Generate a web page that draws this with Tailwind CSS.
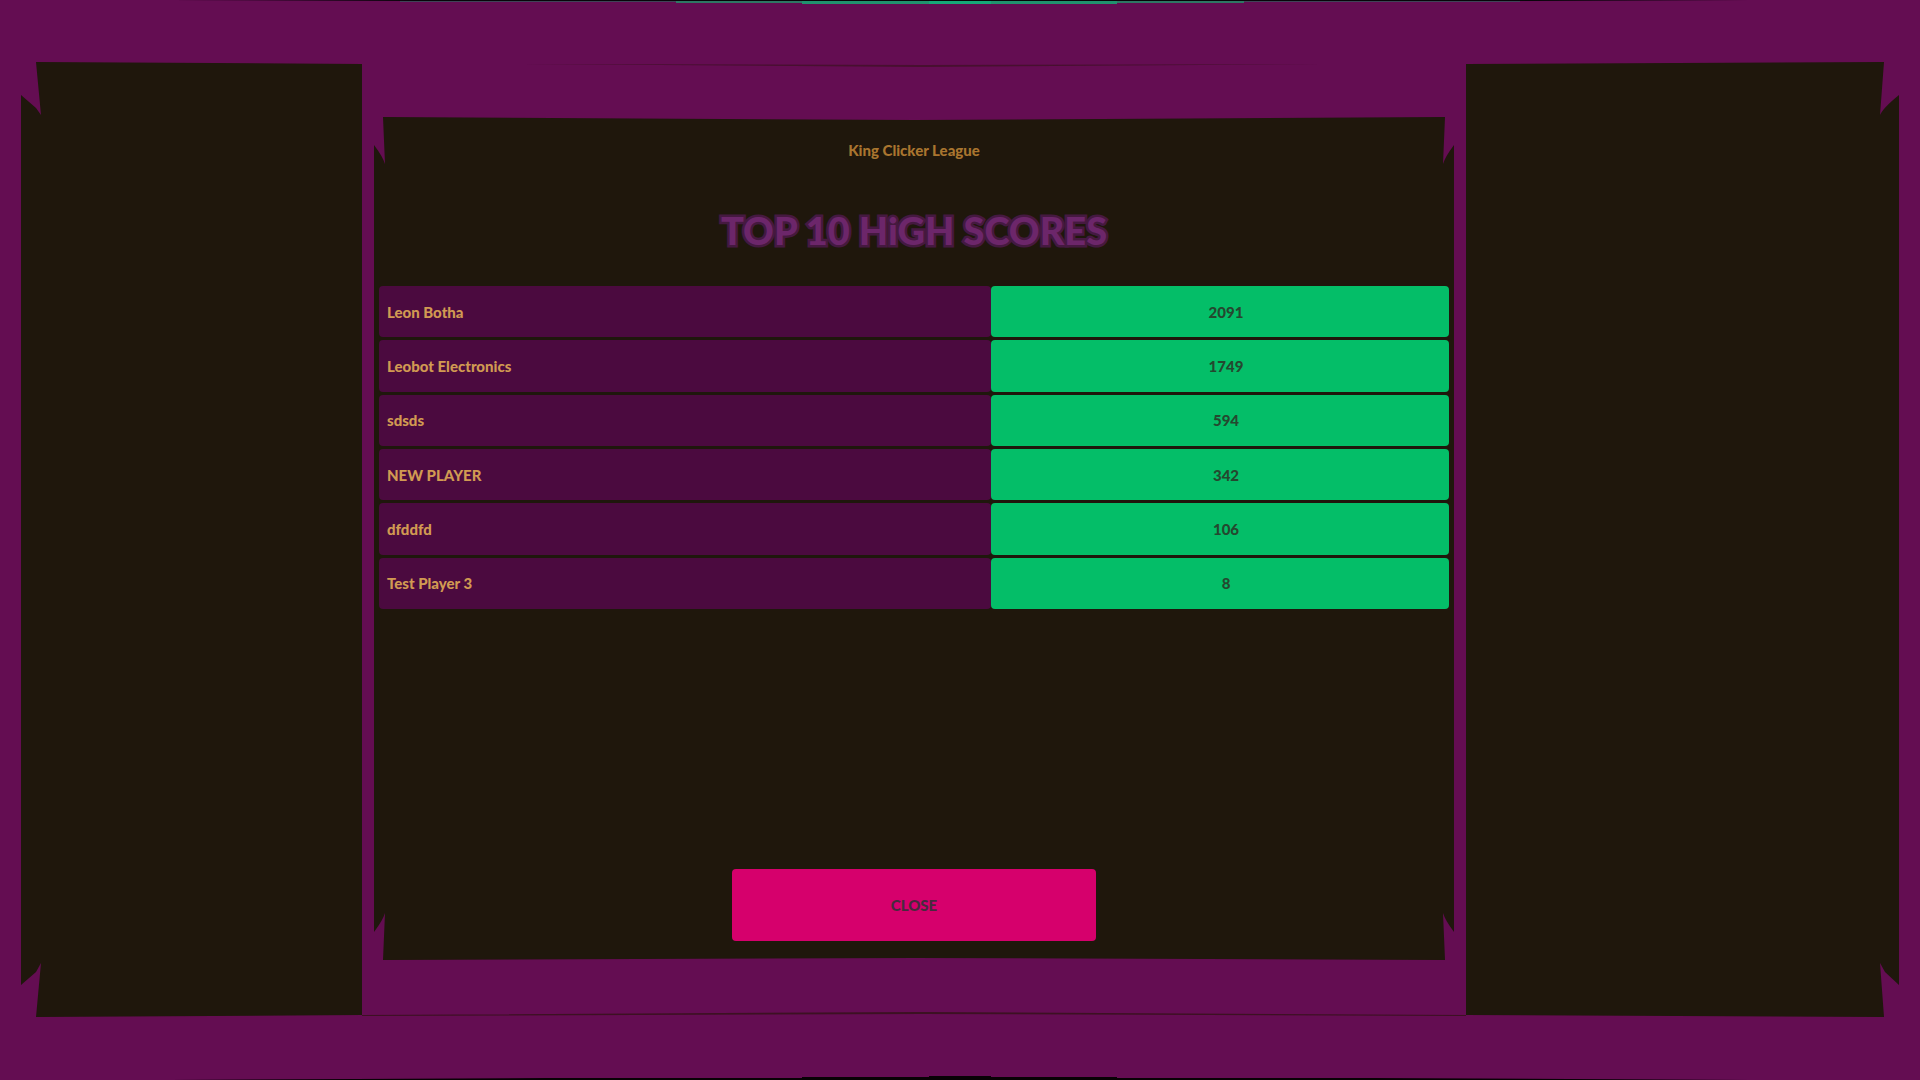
<!DOCTYPE html>
<html lang="en">

<head>
    <meta charset="UTF-8">
    <title>King Clicker League</title>
    <script src="https://cdn.jsdelivr.net/npm/@tailwindcss/browser@4"></script>
</head>

<body class="bg-[#640d52] font-['Lato',sans-serif] text-[15px] leading-5 font-black">
    <div class="relative isolate grid min-h-screen grid-cols-[362fr_1104fr_454fr] py-16">

        <!-- outer frame -->
        <svg class="absolute inset-0 -z-10 h-full w-full" viewBox="0 0 1920 1080" preserveAspectRatio="none" aria-hidden="true">
            <path fill="#1f170c" d="M36 62 L362 64 H1466 L1884 62 L1880 115 Q1883 108 1899 95 V985 L1885 972 L1880 963 L1884 1017 L1466 1015 H362 L36 1017 L41 963 L36 972 L21 985 V95 L36 108 L41 115Z" />
            <path fill="#070509" d="M170 0 H1748 L1500 1 H420Z" />
            <path fill="#3f4357" d="M400 1 H1520 V2 H400Z" />
            <path fill="#2f7764" d="M676 1 H1244 V3 H676Z" />
            <path fill="#20936e" d="M802 1 H1117 V4 H802Z" />
            <path fill="#16a878" d="M929 1 H991 V4 H929Z" />
            <path fill="#080205" d="M170 1080 L550 1078 H802 V1077 H929 V1076 H991 V1077 H1117 V1078 H1370 L1748 1080Z" />
        </svg>

        <main class="relative isolate col-start-2 flex flex-col items-center bg-[#640d52] px-[17px] pt-[76px] pb-[75px]">

            <!-- panel frame -->
            <svg class="absolute inset-0 -z-10 h-full w-full" viewBox="0 0 1104 951" preserveAspectRatio="none" aria-hidden="true">
                <path fill="#1f170c" d="M21 53 L552 56 L1083 53 L1081 100 Q1083 93 1092 81 V867 Q1083 855 1081 848 L1083 895 L552 893 L21 895 L23 848 Q21 855 12 867 V81 Q21 93 23 100Z" />
                <path fill="#47102f" d="M160 0 L560 1 L960 0 L560 3Z" />
                <path fill="#3c1122" d="M0 950 L560 947 L1104 950 V951 L560 949 L0 951Z" />
            </svg>

            <p class="text-[#a9752f]">King Clicker League</p>
            <h1 class="mt-12 text-[38px] leading-[44px] text-[#6c266a] [-webkit-text-stroke:5px_#451940] [paint-order:stroke]">TOP 10 HiGH SCORES</h1>

            <table class="mt-[31px] h-[329px] w-full table-fixed border-separate border-spacing-x-0 border-spacing-y-[3px]">
                <colgroup>
                    <col class="w-[57.2%]">
                    <col>
                </colgroup>
                <tbody>
                    <tr>
                        <th scope="row" class="rounded bg-[#4b0a3f] pl-2 text-left font-black text-[#d19a52]">Leon Botha</th>
                        <td class="rounded bg-[#04be68] pl-3 text-center text-[#24482f]">2091</td>
                    </tr>
                    <tr>
                        <th scope="row" class="rounded bg-[#4b0a3f] pl-2 text-left font-black text-[#d19a52]">Leobot Electronics</th>
                        <td class="rounded bg-[#04be68] pl-3 text-center text-[#24482f]">1749</td>
                    </tr>
                    <tr>
                        <th scope="row" class="rounded bg-[#4b0a3f] pl-2 text-left font-black text-[#d19a52]">sdsds</th>
                        <td class="rounded bg-[#04be68] pl-3 text-center text-[#24482f]">594</td>
                    </tr>
                    <tr>
                        <th scope="row" class="rounded bg-[#4b0a3f] pl-2 text-left font-black text-[#d19a52]">NEW PLAYER</th>
                        <td class="rounded bg-[#04be68] pl-3 text-center text-[#24482f]">342</td>
                    </tr>
                    <tr>
                        <th scope="row" class="rounded bg-[#4b0a3f] pl-2 text-left font-black text-[#d19a52]">dfddfd</th>
                        <td class="rounded bg-[#04be68] pl-3 text-center text-[#24482f]">106</td>
                    </tr>
                    <tr>
                        <th scope="row" class="rounded bg-[#4b0a3f] pl-2 text-left font-black text-[#d19a52]">Test Player 3</th>
                        <td class="rounded bg-[#04be68] pl-3 text-center text-[#24482f]">8</td>
                    </tr>
                </tbody>
            </table>

            <button type="button" class="mt-auto h-[72px] w-[34%] rounded bg-[#d6006c] text-[#472a3d]">CLOSE</button>
        </main>
    </div>
</body>

</html>
